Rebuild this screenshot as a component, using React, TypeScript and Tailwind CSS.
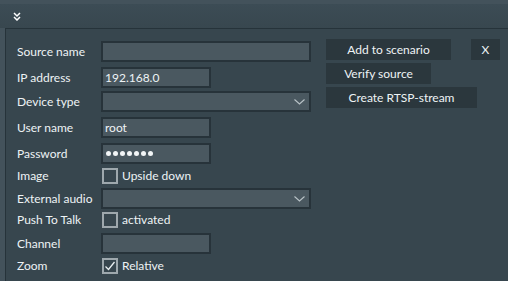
const font = { fontFamily: 'Lato, "Noto Sans", sans-serif' };

function TextInput({ value, w, password }: { value?: string; w: string; password?: boolean }) {
  return (
    <div
      className={`${w} h-[21px] bg-[#4a5860] border-2 border-[#27333a] flex items-center px-[2px] text-[12px] text-[#eef3f5] leading-none`}
    >
      {password ? (
        <div className="flex gap-[2px] pl-[1px]">
          {[0, 1, 2, 3, 4, 5, 6].map((i) => (
            <div key={i} className="w-[5px] h-[5px] rounded-full bg-[#f2f5f6]" />
          ))}
        </div>
      ) : (
        value
      )}
    </div>
  );
}

function Select() {
  return (
    <div className="w-[210px] h-[21px] bg-[#4a5860] border-2 border-[#27333a] flex items-center justify-end pr-[4px]">
      <svg width="11" height="6" viewBox="0 0 11 6">
        <path d="M0.5 0.5 L5.5 5 L10.5 0.5" stroke="#b9c3c7" strokeWidth="1.1" fill="none" />
      </svg>
    </div>
  );
}

function Check({ label, checked }: { label: string; checked?: boolean }) {
  return (
    <div className="flex items-center gap-[4px] ml-[1px]">
      <div className="w-[16px] h-[16px] border-2 border-[#9ea8ad] flex items-center justify-center">
        {checked && (
          <svg width="12" height="12" viewBox="0 0 12 12">
            <path d="M1.5 6.5 L4.5 9.5 L10.5 2" stroke="#e8eef0" strokeWidth="1.3" fill="none" />
          </svg>
        )}
      </div>
      <span className="text-[12px] text-[#eef3f5]">{label}</span>
    </div>
  );
}

function Row({ label, h, mt, children }: { label: string; h: string; mt: string; children: React.ReactNode }) {
  return (
    <div className={`flex items-center ${h} ${mt}`}>
      <div className="w-[84px] text-[12px] text-[#eef3f5] whitespace-nowrap">{label}</div>
      {children}
    </div>
  );
}

function Btn({ label, w }: { label: string; w: string }) {
  return (
    <div className={`${w} h-[21px] bg-[#2b373d] flex items-center justify-center text-[12px] text-[#eef3f5]`}>
      {label}
    </div>
  );
}

export default function App() {
  return (
    <div className="w-[508px] h-[281px] bg-[#43525b] overflow-hidden pt-[4px]" style={font}>
      {/* header */}
      <div className="h-[24px] bg-gradient-to-b from-[#3c4c55] to-[#38474f] flex items-center pl-[13px]">
        <svg width="8" height="9" viewBox="0 0 8 9">
          <path d="M1 1 L4 4 L7 1 M1 5 L4 8 L7 5" stroke="#ffffff" strokeWidth="1.5" fill="none" />
        </svg>
      </div>
      <div className="ml-[5px] h-[253px] bg-[#37464e] border-l border-t border-[#26333a] flex">
        <div className="pl-[11px] pt-[12px] flex flex-col">
          <Row label="Source name" h="h-[21px]" mt="mt-0">
            <TextInput w="w-[210px]" />
          </Row>
          <Row label="IP address" h="h-[21px]" mt="mt-[5px]">
            <TextInput w="w-[110px]" value="192.168.0" />
          </Row>
          <Row label="Device type" h="h-[21px]" mt="mt-[3px]">
            <Select />
          </Row>
          <Row label="User name" h="h-[21px]" mt="mt-[5px]">
            <TextInput w="w-[110px]" value="root" />
          </Row>
          <Row label="Password" h="h-[21px]" mt="mt-[5px]">
            <TextInput w="w-[110px]" password />
          </Row>
          <Row label="Image" h="h-[16px]" mt="mt-[4px]">
            <Check label="Upside down" />
          </Row>
          <Row label="External audio" h="h-[21px]" mt="mt-[4px]">
            <Select />
          </Row>
          <Row label="Push To Talk" h="h-[16px]" mt="mt-[3px]">
            <Check label="activated" />
          </Row>
          <Row label="Channel" h="h-[21px]" mt="mt-[5px]">
            <TextInput w="w-[110px]" />
          </Row>
          <Row label="Zoom" h="h-[16px]" mt="mt-[4px]">
            <Check label="Relative" checked />
          </Row>
        </div>
        <div className="ml-[15px] pt-[10px] flex flex-col gap-[3px]">
          <div className="flex gap-[20px]">
            <Btn label="Add to scenario" w="w-[125px]" />
            <Btn label="X" w="w-[29px]" />
          </div>
          <Btn label="Verify source" w="w-[105px]" />
          <Btn label="Create RTSP-stream" w="w-[151px]" />
        </div>
      </div>
    </div>
  );
}
